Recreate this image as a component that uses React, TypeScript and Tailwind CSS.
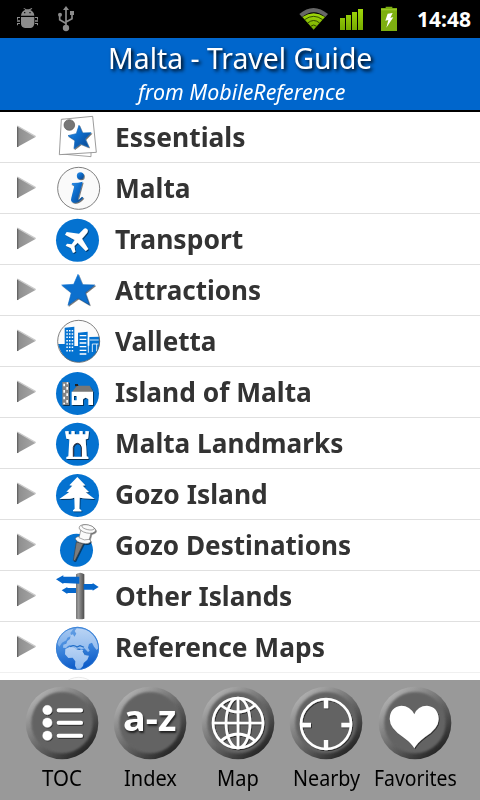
import React from "react";

type RowItem = {
  label: string;
  width: number;
  icon: React.ReactNode;
};

type TabItem = {
  label: string;
  width: number;
  cell: string;
  icon: React.ReactNode;
};

type TextProps = {
  text: string;
  width: number;
  size: number;
  className?: string;
};

// Single line of text stretched to an exact advance width
const FitText: React.FC<TextProps> = ({ text, width, size, className }) => {
  const ref = React.useRef<HTMLSpanElement>(null);
  const [scale, setScale] = React.useState(1);

  React.useLayoutEffect(() => {
    if (ref.current) {
      setScale(width / ref.current.offsetWidth);
    }
  }, [text, width]);

  return (
    <span className={`block whitespace-nowrap ${className ?? ""}`} style={{ width, fontSize: size }}>
      <span ref={ref} className="inline-block origin-left" style={{ transform: `scaleX(${scale})` }}>
        {text}
      </span>
    </span>
  );
};

const Defs: React.FC = () => (
  <svg className="absolute h-0 w-0" aria-hidden="true">
    <defs>
      <filter id="drop" x="-20%" y="-20%" width="150%" height="150%">
        <feDropShadow dx="2.5" dy="3" stdDeviation="2" floodColor="#000" floodOpacity="0.6" />
      </filter>
      <linearGradient id="bevel" x1="0" y1="0" x2="1" y2="1">
        <stop offset="0" stopColor="#3b92e6" />
        <stop offset="0.45" stopColor="#0a6ccb" />
        <stop offset="1" stopColor="#054285" />
      </linearGradient>
      <linearGradient id="pole" x1="0" y1="0" x2="1" y2="0">
        <stop offset="0" stopColor="#777" />
        <stop offset="0.3" stopColor="#999" />
        <stop offset="1" stopColor="#4c4c4c" />
      </linearGradient>
      <linearGradient id="arrow" x1="0" y1="0" x2="1" y2="0">
        <stop offset="0" stopColor="#8c8c8c" />
        <stop offset="1" stopColor="#a8a8a8" />
      </linearGradient>
      <linearGradient id="ocean" x1="0.2" y1="0" x2="0.4" y2="1">
        <stop offset="0" stopColor="#6ba4e6" />
        <stop offset="0.5" stopColor="#3e86dc" />
        <stop offset="1" stopColor="#0b5ac8" />
      </linearGradient>
      <linearGradient id="land" x1="0" y1="0" x2="0" y2="1">
        <stop offset="0" stopColor="#b9d3f4" />
        <stop offset="1" stopColor="#8fbaee" />
      </linearGradient>
      <linearGradient id="rim" x1="0.15" y1="0.1" x2="0.85" y2="0.92">
        <stop offset="0" stopColor="#b2b2b2" />
        <stop offset="0.3" stopColor="#858585" />
        <stop offset="0.65" stopColor="#565656" />
        <stop offset="1" stopColor="#202020" />
      </linearGradient>
      <linearGradient id="green" x1="0" y1="0" x2="0" y2="1">
        <stop offset="0" stopColor="#a0d80a" />
        <stop offset="1" stopColor="#76ab00" />
      </linearGradient>
      <filter id="soft" x="-10%" y="-10%" width="120%" height="120%">
        <feGaussianBlur stdDeviation="3.5" />
      </filter>
    </defs>
  </svg>
);

const RowSvg: React.FC<{ y: number; children: React.ReactNode }> = ({ y, children }) => (
  <svg className="h-[50px] w-12 shrink-0" viewBox={`162 ${y} 144 150`}>
    {children}
  </svg>
);

const EssentialsIcon = () => (
  <RowSvg y={6}>
    <path d="M188 28l85 8 0 104-87-8z" fill="#fff" stroke="#777" strokeWidth="2" />
    <path d="M184 28l94-9 11 108-111 7z" fill="#fff" stroke="#777" strokeWidth="2.2" />
    <circle cx="208" cy="45" r="16" fill="#777" stroke="#555" strokeWidth="2" />
    <path
      d="M237 46l10 23 26-1-18 19 11 24-24-10-20 15 3-25-21-14 25-6z"
      fill="url(#bevel)"
      stroke="#0a62b8"
      strokeWidth="2"
      filter="url(#drop)"
    />
  </RowSvg>
);

const InfoIcon = () => (
  <RowSvg y={159}>
    <circle cx="236" cy="235" r="63" fill="#fafafa" stroke="#666" strokeWidth="2.5" />
    <g fill="url(#bevel)" filter="url(#drop)">
      <circle cx="241" cy="197" r="10.5" />
      <path d="M216 219q20 0 32-4l-14 51q-1 6 4 2l8-8 4 3q-14 16-27 15-13-1-9-15l8-31q2-8-7-8z" />
    </g>
  </RowSvg>
);

const PlaneIcon = () => (
  <RowSvg y={0}>
    <circle cx="232.500" cy="79" r="64.500" fill="#0472d0" />
    <path
      d="M261 45q5 3 0 12l-15 17 19 31-8 6-24-25-10 10 3 17-7 4-7-15-15-7 4-6 14 2 9-13-29-16 5-8 37 5 15-15q5-3 9 1z"
      fill="#fff"
      filter="url(#drop)"
    />
  </RowSvg>
);

const StarIcon = () => (
  <RowSvg y={153}>
    <path
      d="M234 181l13 31 37 1-29 23 13 36-34-20-30 22 10-38-29-23 36-2z"
      fill="#0a6fce"
      stroke="url(#bevel)"
      strokeWidth="2"
      filter="url(#drop)"
    />
  </RowSvg>
);

const CityIcon = () => (
  <RowSvg y={0}>
    <circle cx="236" cy="76" r="63" fill="#fbfbfb" />
    <path
      d="M174 84h20V35l29-3v58h11V50l29-3v42h5V63l30-1a63 63 0 0 1-60 77q-50 0-64-55z"
      fill="#0472d0"
    />
    <path
      d="M199 44h21M199 54h21M199 64h21M199 74h21M199 84h21M199 94h21M199 104h21"
      stroke="#fff"
      strokeWidth="4.500"
      strokeDasharray="4.500 3.500"
    />
    <path
      d="M239 59h20M239 70h20M239 81h20M239 92h20M239 103h20M239 114h20"
      stroke="#fff"
      strokeWidth="4"
    />
    <path d="M265 66v44M269 72h27M277 108V84h18M290 84v22" stroke="#fff" strokeWidth="2.500" fill="none" />
    <circle cx="236" cy="76" r="63" fill="none" stroke="#666" strokeWidth="2.500" />
  </RowSvg>
);

const HouseIcon = () => (
  <RowSvg y={153}>
    <circle cx="232.500" cy="232.500" r="64.500" fill="#0472d0" />
    <g filter="url(#drop)">
      <path d="M187 198h20v69h-20z" fill="#858585" />
      <path d="M216 228l15-19h38l11 19z" fill="#777" />
      <path d="M225 204h9v6h-9z" fill="#222" />
      <path
        fillRule="evenodd"
        d="M215 227h64v40h-14v-17q-8-10-16 0v17h-34zM222 240v13h8v-13z"
        fill="#fff"
      />
    </g>
    <path
      d="M190 203h5v8h-5zM199 213h5v8h-5zM190 222h5v8h-5zM199 232h5v8h-5zM190 242h5v8h-5zM199 252h5v8h-5zM200 199h4v6h-4zM190 260h5v5h-5z"
      fill="#fff"
    />
  </RowSvg>
);

const TowerIcon = () => (
  <RowSvg y={0}>
    <circle cx="232.500" cy="79" r="64.500" fill="#0472d0" />
    <path
      fillRule="evenodd"
      d="M195 40l11-1v10h8V39h10v10h14V39h10v10h8V39l11 1-3 22-7 2 3 51 5 2v6h-66v-6l6-2 3-51-9-2zM220 116h24V88q-2-11-12-12-10 1-12 12z"
      fill="#fff"
      filter="url(#drop)"
    />
    <path d="M220 116V88q2-11 12-12 10 1 12 12v28" fill="none" stroke="#223" strokeWidth="3" />
  </RowSvg>
);

const TreeIcon = () => (
  <RowSvg y={153}>
    <circle cx="232.500" cy="232.500" r="64.500" fill="#0472d0" />
    <path
      d="M232 177l24 25-8 1 19 19-10 1 27 20-33-2-12-2-1 33 6 5v3h-25v-3l5-5-1-33-13 3-32 1 30-21-9-1 18-18-9-1z"
      fill="#fff"
      filter="url(#drop)"
    />
  </RowSvg>
);

const PinIcon = () => (
  <RowSvg y={0}>
    <circle cx="229.500" cy="91" r="49.500" fill="#0472d0" />
    <g filter="url(#drop)">
      <path d="M229 66l21 5-25 51-5-1z" fill="#7c7c7c" stroke="#333" strokeWidth="1.500" />
      <g fill="#fafafa" stroke="#555" strokeWidth="1.500">
        <ellipse cx="249" cy="60" rx="23" ry="10" transform="rotate(12 249 60)" />
        <path d="M243 28l31 8-6 22q-15 6-31-5z" />
        <ellipse cx="262" cy="27" rx="25" ry="12" transform="rotate(13 262 27)" />
        <ellipse cx="264" cy="22" rx="19" ry="7" transform="rotate(13 264 22)" />
      </g>
    </g>
  </RowSvg>
);

const SignIcon = () => (
  <RowSvg y={153}>
    <path d="M228 163q12-9 25 0v133q-12 3-25 0z" fill="url(#pole)" />
    <path
      d="M168 178l22-12v4h48v21l-48-2v3zM185 211l17-10v3h26v15h-26v3zM251 192h27v-3l18 12-18 11v-3h-27z"
      fill="#0667cb"
    />
  </RowSvg>
);

const EarthIcon = () => (
  <RowSvg y={12}>
    <circle cx="232.500" cy="91" r="64.500" fill="url(#ocean)" />
    <g fill="url(#land)">
      <path d="M171 76q8-29 33-40l16-3-9 12 4 8-13 6-3 8-13 7-8 12z" opacity="0.75" />
      <path d="M230 31q30 0 48 19 16 18 17 41l-5 5-8-10-6-12-9 4-3 11 5 9-5 4-11-11-8 3-18-1-5-6-8 1-3-7-7 3-6 6-9-1 1-9 9-3 3-8 8-6 2-11 7-3 4 7 6-9-5-8z" />
      <path d="M196 93l13-6 13 1 7 6 19 1 9 17 10 1-5 12-11 10-2 9-9 10-9 1-6-12 1-13-8-11-13 1-10-11z" />
    </g>
    <path d="M211 86q10-7 20 1l9-4 12 5M232 93l9 1M249 99l7 12" stroke="#1f6cc6" strokeWidth="3.500" fill="none" />
    <circle cx="232.500" cy="91" r="63" fill="none" stroke="#2f78d0" strokeWidth="2" />
  </RowSvg>
);

const NextIcon = () => (
  <RowSvg y={165}>
    <circle cx="236" cy="241" r="63" fill="#fcfcfc" stroke="#e4e4e4" strokeWidth="2.500" />
  </RowSvg>
);

const rows: RowItem[] = [
  { label: "Essentials", width: 130, icon: <EssentialsIcon /> },
  { label: "Malta", width: 76, icon: <InfoIcon /> },
  { label: "Transport", width: 128.5, icon: <PlaneIcon /> },
  { label: "Attractions", width: 146.5, icon: <StarIcon /> },
  { label: "Valletta", width: 101.5, icon: <CityIcon /> },
  { label: "Island of Malta", width: 197, icon: <HouseIcon /> },
  { label: "Malta Landmarks", width: 228, icon: <TowerIcon /> },
  { label: "Gozo Island", width: 152.5, icon: <TreeIcon /> },
  { label: "Gozo Destinations", width: 236, icon: <PinIcon /> },
  { label: "Other Islands", width: 177, icon: <SignIcon /> },
  { label: "Reference Maps", width: 210, icon: <EarthIcon /> },
];

const TocIcon = () => (
  <g fill="#fff" stroke="#fff">
    <circle cx="65" cy="72" r="14" />
    <circle cx="65" cy="110" r="14" />
    <circle cx="65" cy="149" r="14" />
    <path d="M99 73h67M99 110h67M99 149h67" strokeWidth="12" strokeLinecap="round" />
  </g>
);

const GlobeIcon = () => (
  <g fill="none" stroke="#fff" strokeWidth="8">
    <circle cx="109" cy="111" r="75" />
    <ellipse cx="109" cy="111" rx="36" ry="75" />
    <path d="M109 35v152M33 111h152M57 57q52 42 104 0M57 165q52-42 104 0" />
  </g>
);

const NearbyIcon = () => (
  <g fill="none" stroke="#fff">
    <circle cx="109" cy="114" r="75" strokeWidth="8" />
    <path d="M109 40v27M109 162v26M35 117h29M155 117h28" strokeWidth="13" />
  </g>
);

const HeartIcon = () => (
  <path
    d="M107 187Q99 172 76 155 33 128 33 99 34 63 68 59 94 59 107 85 117 59 145 59 178 62 180 99 180 127 139 153 115 171 107 187z"
    fill="#fff"
  />
);

const tabs: TabItem[] = [
  { label: "TOC", width: 40, cell: "w-[88px]", icon: <TocIcon /> },
  { label: "Index", width: 53, cell: "w-[88px]", icon: null },
  { label: "Map", width: 42, cell: "w-[88px]", icon: <GlobeIcon /> },
  { label: "Nearby", width: 67, cell: "w-[88px]", icon: <NearbyIcon /> },
  { label: "Favorites", width: 83, cell: "w-[91px]", icon: <HeartIcon /> },
];

const StatusBar: React.FC = () => (
  <div className="flex h-[38px] shrink-0 bg-black">
    <svg className="h-[38px] w-[400px] shrink-0" viewBox="0 0 1200 114">
      <g fill="#8c8c8c">
        <path d="M63 47q1-14 13-18l-6-4 2-1 7 4h8l8-4 2 2-6 4q11 5 12 17zM63 51h40v21q-3 12-12 12H75q-11-1-12-12z" />
        <path d="M51 51h9v3h-6v5h-3zM51 61h9v4h-9zM51 76v-7h9v3h-6v4zM114 59h-3v-5h-6v-3h9zM105 61h9v4h-9zM105 69h9v7h-3v-4h-6z" />
        <path d="M72 36h4v4h-4zM88 36h4v4h-4z" fill="#111" />
      </g>
      <g fill="none" stroke="#8c8c8c" strokeWidth="5">
        <path d="M198 78V26M179 47v12l18 11M216 43v13l-18 10" />
        <path d="M198 18l-9 12h18z" fill="#8c8c8c" stroke="none" />
        <circle cx="198" cy="84" r="9.500" fill="#8c8c8c" stroke="none" />
        <circle cx="180" cy="44" r="6" fill="#8c8c8c" stroke="none" />
        <path d="M210 33h12v12h-12z" fill="#8c8c8c" stroke="none" />
      </g>
      <path d="M898 42q42-36 86 0l-8 9q-34-28-70 0z" fill="#666" />
      <path d="M907 51q34-22 68 0l-34 38z" fill="url(#green)" />
      <path d="M914 59q27-20 54 0M923 69q18-15 36 0M932 79q9-8 18 0" fill="none" stroke="#1e3000" strokeWidth="2.500" />
      <path d="M1020 54h15v36h-15zM1038 45h15v45h-15zM1056 36h15v54h-15zM1074 27h15v63h-15z" fill="url(#green)" />
      <path d="M1143 24h14v-4h20v4h14v69h-48z" fill="#7daf10" />
      <path d="M1143 28h48v3h-48zM1143 31v58" fill="#a5cf30" />
      <path d="M1163 41l15-2-7 14 9-1-21 31 6-23-9 2z" fill="#fff" />
    </svg>
    <div className="pt-[5px] pl-[17px] font-bold leading-7 text-white">
      <FitText text="14:48" width={54} size={21} />
    </div>
  </div>
);

const Header: React.FC = () => (
  <div className="flex h-[74px] shrink-0 flex-col items-center border-b-2 border-black bg-[#0066cc] text-white">
    <FitText
      text="Malta - Travel Guide"
      width={264}
      size={29}
      className="mt-[2px] leading-9 [text-shadow:2px_2px_4px_#000]"
    />
    <FitText
      text="from MobileReference"
      width={207}
      size={21.5}
      className="mt-0.5 ml-[3px] leading-7 italic"
    />
  </div>
);

const ListRow: React.FC<{ item: RowItem }> = ({ item }) => (
  <div className="flex h-[51px] shrink-0 border-b border-[#e0e0e0] last:border-[#f0f0f0]">
    <svg className="h-[50px] w-[54px] shrink-0" viewBox="0 0 162 150">
      <path d="M51 41l57 33-57 32z" fill="url(#arrow)" />
      <path d="M53 43v62" stroke="#666" strokeWidth="4" />
      <path d="M52 42l54 31" stroke="#ccc" strokeWidth="4" />
    </svg>
    {item.icon}
    <FitText
      text={item.label}
      width={item.width}
      size={27}
      className="ml-[13px] font-bold leading-[50px] text-[#333]"
    />
  </div>
);

const Tab: React.FC<{ tab: TabItem }> = ({ tab }) => (
  <div className={`flex shrink-0 flex-col items-center pt-1.5 ${tab.cell}`}>
    <div className="relative mr-px h-[74px] w-[74px]">
      <svg className="h-[74px] w-[74px]" viewBox="-2 0 222 222">
        <circle cx="109" cy="111" r="109" fill="url(#rim)" />
        <circle cx="109" cy="110" r="92" fill="#646464" filter="url(#soft)" />
        <g filter="url(#drop)">{tab.icon}</g>
      </svg>
      {tab.icon === null && (
        <div className="absolute inset-x-0 top-[7px] flex justify-center font-bold leading-[50px] text-white [text-shadow:1px_2px_2px_#222]">
          <FitText text="a-z" width={53} size={35} />
        </div>
      )}
    </div>
    <FitText text={tab.label} width={tab.width} size={21.5} className="leading-[36px] text-black" />
  </div>
);

const App: React.FC = () => {
  return (
    <div className="relative flex h-[800px] w-[480px] flex-col overflow-hidden bg-white font-['Noto_Sans','Open_Sans',sans-serif]">
      <Defs />
      <StatusBar />
      <Header />
      <div className="h-[568px] shrink-0 overflow-hidden">
        <div className="flex flex-col">
          {rows.map((item) => (
            <ListRow key={item.label} item={item} />
          ))}
        </div>
        <div className="flex h-[51px] pl-[54px]">
          <NextIcon />
        </div>
      </div>
      <div className="flex h-[120px] shrink-0 bg-[#999] pl-[18px]">
        {tabs.map((tab) => (
          <Tab key={tab.label} tab={tab} />
        ))}
      </div>
    </div>
  );
};

export default App;
